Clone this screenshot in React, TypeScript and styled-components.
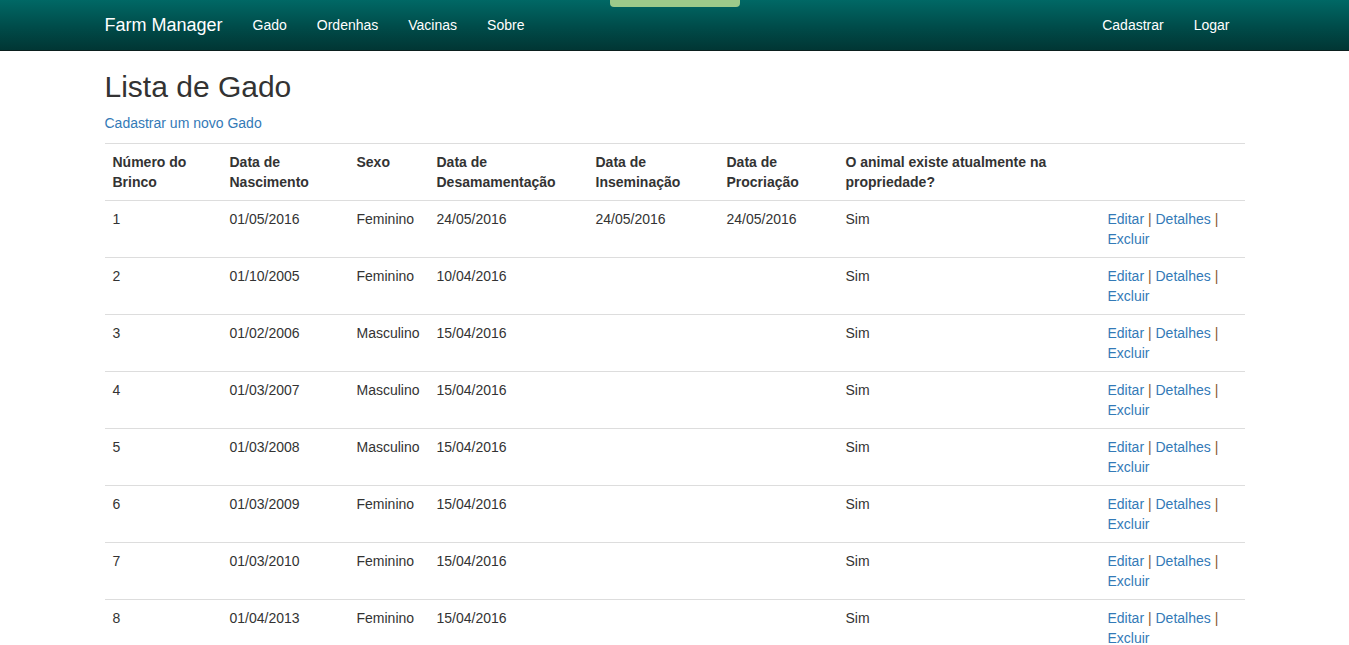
import React from "react";
import styled, { createGlobalStyle } from "styled-components";

const GlobalStyle = createGlobalStyle`
  html, body { margin: 0; padding: 0; }
  body {
    font-family: "Liberation Sans", Arial, Helvetica, sans-serif;
    font-size: 14px;
    line-height: 20px;
    color: #333;
    background: #fff;
  }
  * { box-sizing: border-box; }
`;

const NavBar = styled.nav`
  height: 51px;
  background: linear-gradient(to bottom, #006865 0%, #004b49 55%, #013634 100%);
  border-bottom: 1px solid #0b1f1e;
  position: relative;
`;

const Tab = styled.div`
  position: absolute;
  top: 0;
  left: 610px;
  width: 130px;
  height: 7px;
  background: #9cc98a;
  border-radius: 0 0 4px 4px;
`;

const Container = styled.div`
  width: 1170px;
  margin: 0 auto;
  padding: 0 15px;
`;

const NavInner = styled(Container)`
  display: flex;
  align-items: center;
  height: 50px;
`;

const Brand = styled.a`
  font-size: 18px;
  line-height: 20px;
  color: #fff;
  padding: 15px 15px 15px 0;
  text-decoration: none;
`;

const NavList = styled.ul<{ $right?: boolean }>`
  display: flex;
  list-style: none;
  margin: 0;
  padding: 0;
  margin-left: ${(p) => (p.$right ? "auto" : "0")};
`;

const NavLink = styled.a`
  display: block;
  color: #fff;
  font-size: 14px;
  line-height: 20px;
  padding: 15px;
  text-decoration: none;
`;

const Title = styled.h2`
  font-size: 30px;
  font-weight: 500;
  line-height: 33px;
  margin: 19px 0 10px;
  color: #333;
`;

const Para = styled.p`
  margin: 0 0 10px;
`;

const Link = styled.a`
  color: #337ab7;
  text-decoration: none;
`;

const Table = styled.table`
  width: 100%;
  border-collapse: collapse;
  table-layout: fixed;
  border-top: 1px solid #ddd;
`;

const Th = styled.th`
  text-align: left;
  font-weight: bold;
  padding: 8px;
  vertical-align: top;
  border-bottom: 1px solid #ddd;
  line-height: 20px;
`;

const Td = styled.td`
  padding: 8px;
  vertical-align: top;
  border-bottom: 1px solid #ddd;
  line-height: 20px;
  height: 57px;
`;

const Sep = styled.span`
  color: #8a5a30;
`;

const cols = [117, 127, 80, 159, 131, 119, 262, 145];

type Row = {
  n: string;
  nasc: string;
  sexo: string;
  desam: string;
  insem: string;
  proc: string;
};

const rows: Row[] = [
  { n: "1", nasc: "01/05/2016", sexo: "Feminino", desam: "24/05/2016", insem: "24/05/2016", proc: "24/05/2016" },
  { n: "2", nasc: "01/10/2005", sexo: "Feminino", desam: "10/04/2016", insem: "", proc: "" },
  { n: "3", nasc: "01/02/2006", sexo: "Masculino", desam: "15/04/2016", insem: "", proc: "" },
  { n: "4", nasc: "01/03/2007", sexo: "Masculino", desam: "15/04/2016", insem: "", proc: "" },
  { n: "5", nasc: "01/03/2008", sexo: "Masculino", desam: "15/04/2016", insem: "", proc: "" },
  { n: "6", nasc: "01/03/2009", sexo: "Feminino", desam: "15/04/2016", insem: "", proc: "" },
  { n: "7", nasc: "01/03/2010", sexo: "Feminino", desam: "15/04/2016", insem: "", proc: "" },
  { n: "8", nasc: "01/04/2013", sexo: "Feminino", desam: "15/04/2016", insem: "", proc: "" },
];

export default function App() {
  return (
    <>
      <GlobalStyle />
      <NavBar>
        <NavInner>
          <Brand href="#">Farm Manager</Brand>
          <NavList>
            <li><NavLink href="#">Gado</NavLink></li>
            <li><NavLink href="#">Ordenhas</NavLink></li>
            <li><NavLink href="#">Vacinas</NavLink></li>
            <li><NavLink href="#">Sobre</NavLink></li>
          </NavList>
          <NavList $right>
            <li><NavLink href="#">Cadastrar</NavLink></li>
            <li><NavLink href="#">Logar</NavLink></li>
          </NavList>
        </NavInner>
        <Tab />
      </NavBar>
      <Container>
        <Title>Lista de Gado</Title>
        <Para>
          <Link href="#">Cadastrar um novo Gado</Link>
        </Para>
        <Table>
          <colgroup>
            {cols.map((w, i) => (
              <col key={i} style={{ width: w }} />
            ))}
          </colgroup>
          <thead>
            <tr>
              <Th>Número do Brinco</Th>
              <Th>Data de Nascimento</Th>
              <Th>Sexo</Th>
              <Th>Data de Desamamentação</Th>
              <Th>Data de Inseminação</Th>
              <Th>Data de Procriação</Th>
              <Th>O animal existe atualmente na propriedade?</Th>
              <Th></Th>
            </tr>
          </thead>
          <tbody>
            {rows.map((r) => (
              <tr key={r.n}>
                <Td>{r.n}</Td>
                <Td>{r.nasc}</Td>
                <Td>{r.sexo}</Td>
                <Td>{r.desam}</Td>
                <Td>{r.insem}</Td>
                <Td>{r.proc}</Td>
                <Td>Sim</Td>
                <Td>
                  <Link href="#">Editar</Link> <Sep>|</Sep>{" "}
                  <Link href="#">Detalhes</Link> <Sep>|</Sep>{" "}
                  <Link href="#">Excluir</Link>
                </Td>
              </tr>
            ))}
          </tbody>
        </Table>
      </Container>
    </>
  );
}
